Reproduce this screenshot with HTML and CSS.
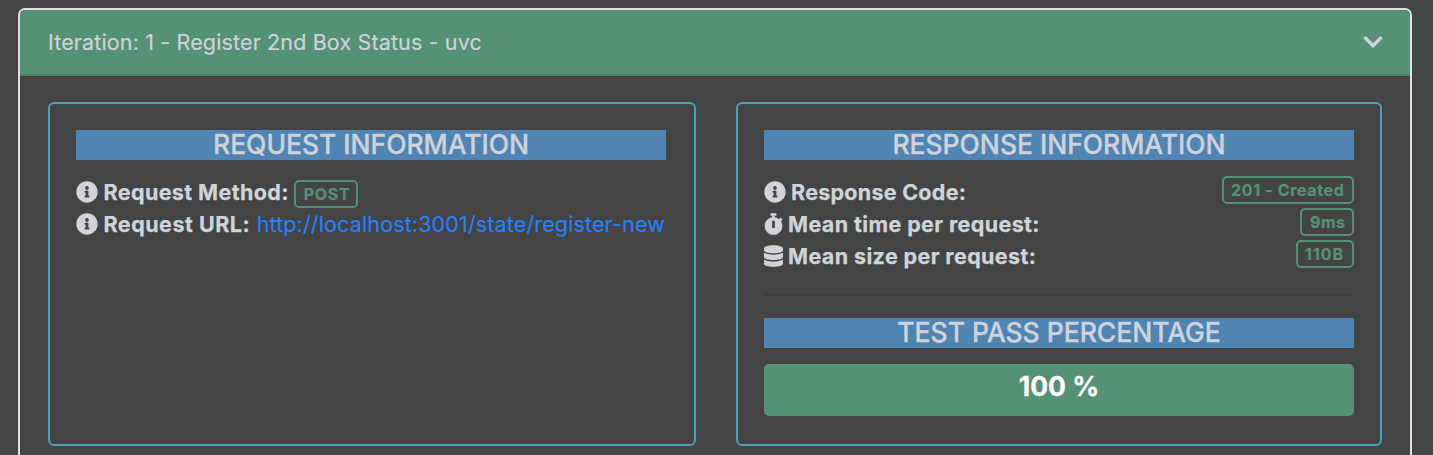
FILE: index.html
```html
<!DOCTYPE html>
<html lang="en">
<head>
<meta charset="utf-8">
<title>Iteration report</title>
<link rel="stylesheet" href="styles.css">
</head>
<body>
<svg class="defs" width="0" height="0">
  <symbol id="info" viewBox="0 0 512 512"><path d="M256 8C119.043 8 8 119.083 8 256c0 136.997 111.043 248 248 248s248-111.003 248-248C504 119.083 392.957 8 256 8zm0 110c23.196 0 42 18.804 42 42s-18.804 42-42 42-42-18.804-42-42 18.804-42 42-42zm56 254c0 6.627-5.373 12-12 12h-88c-6.627 0-12-5.373-12-12v-24c0-6.627 5.373-12 12-12h12v-64h-12c-6.627 0-12-5.373-12-12v-24c0-6.627 5.373-12 12-12h64c6.627 0 12 5.373 12 12v100h12c6.627 0 12 5.373 12 12v24z"/></symbol>
  <symbol id="stopwatch" viewBox="0 0 448 512"><path d="M432 304c0 114.9-93.1 208-208 208S16 418.9 16 304c0-104 76.3-190.2 176-205.5V64h-28c-6.6 0-12-5.4-12-12V12c0-6.6 5.4-12 12-12h120c6.6 0 12 5.4 12 12v40c0 6.600-5.400 12-12 12h-28v34.500c37.500 5.800 71.700 21.600 99.700 44.600l27.500-27.500c4.700-4.700 12.300-4.700 17 0l28.300 28.300c4.700 4.700 4.700 12.300 0 17l-29.400 29.400-.6.6C419.700 223.300 432 262.200 432 304zm-176 36V188.500c0-6.600-5.400-12-12-12h-40c-6.600 0-12 5.400-12 12V340c0 6.600 5.400 12 12 12h40c6.600 0 12-5.400 12-12z"/></symbol>
  <symbol id="database" viewBox="0 0 448 512"><path d="M448 73.143v45.714C448 159.143 347.667 192 224 192S0 159.143 0 118.857V73.143C0 32.857 100.333 0 224 0s224 32.857 224 73.143zM448 176v102.857C448 319.143 347.667 352 224 352S0 319.143 0 278.857V176c48.125 33.143 136.208 48.572 224 48.572S399.874 209.143 448 176zm0 160v102.857C448 479.143 347.667 512 224 512S0 479.143 0 438.857V336c48.125 33.143 136.208 48.572 224 48.572S399.874 369.143 448 336z"/></symbol>
</svg>
<section class="card">
  <header class="card-header">
    <span class="title">Iteration: 1 - Register 2nd Box Status - uvc</span>
    <svg class="chevron" viewBox="0 0 448 512"><path d="M207.029 381.476L12.686 187.132c-9.373-9.373-9.373-24.569 0-33.941l22.667-22.667c9.357-9.357 24.522-9.375 33.901-.04L224 284.505l154.745-154.021c9.379-9.335 24.544-9.317 33.901.04l22.667 22.667c9.373 9.373 9.373 24.569 0 33.941L240.971 381.476c-9.373 9.372-24.569 9.372-33.942 0z"/></svg>
  </header>
  <div class="card-body">
    <article class="panel">
      <h5 class="banner">REQUEST INFORMATION</h5>
      <div class="row"><svg class="icon"><use href="#info"/></svg><strong class="shifted">Request Method:</strong><span class="badge inline">POST</span></div>
      <div class="row"><svg class="icon"><use href="#info"/></svg><strong class="shifted wide">Request URL:</strong><a class="url">http://localhost:3001/state/register-new</a></div>
    </article>
    <article class="panel">
      <h5 class="banner">RESPONSE INFORMATION</h5>
      <div class="row"><svg class="icon response"><use href="#info"/></svg><strong class="code">Response Code:</strong><span class="badge end status">201 - Created</span></div>
      <div class="row"><svg class="icon narrow"><use href="#stopwatch"/></svg><strong>Mean time per request:</strong><span class="badge end time">9ms</span></div>
      <div class="row"><svg class="icon narrow"><use href="#database"/></svg><strong>Mean size per request:</strong><span class="badge end size">110B</span></div>
      <hr class="rule">
      <h5 class="banner">TEST PASS PERCENTAGE</h5>
      <div class="progress">100 %</div>
    </article>
  </div>
</section>
</body>
</html>
```
FILE: styles.css
```css
* { box-sizing: border-box; }
body {
  margin: 0;
  height: 455px;
  padding: 8px 21px 0 18px;
  background: #444;
  color: #ced4da;
  font: 21.5px/32px Inter, sans-serif;
}
.defs { position: absolute; }
.card {
  height: 447px;
  border: 2px solid #dfdfdf;
  border-bottom: 0;
  border-radius: 7px 7px 0 0;
}
.card-header {
  display: flex;
  align-items: center;
  justify-content: space-between;
  height: 66px;
  padding: 0 27px 0 28px;
  background: #559175;
  border-bottom: 2px solid #4a8066;
  border-radius: 5px 5px 0 0;
  color: #cdd2dc;
}
.title { letter-spacing: 0.14px; -webkit-text-stroke: 0.2px; }
.chevron { width: 20px; height: 22px; fill: currentColor; }
.card-body {
  display: grid;
  grid-template-columns: 648px 646px;
  column-gap: 40px;
  padding: 26px 28px 0;
}
.panel {
  height: 344px;
  padding: 26px 26px 0;
  border: 2px solid #46a2b8;
  border-radius: 6px;
}
.banner {
  height: 30px;
  width: 590px;
  margin: 0 0 16px;
  background: #4f84b3;
  color: #ced2da;
  font-size: 26.5px;
  line-height: 29px;
  font-weight: 500;
  letter-spacing: -0.03px;
  text-align: center;
  -webkit-text-stroke: 0.35px;
}
.row { display: flex; align-items: center; height: 32px; white-space: nowrap; }
.row strong {
  font-weight: 700;
  margin-left: 5px;
  letter-spacing: 0.39px;
  -webkit-text-stroke: 0.25px;
}
.row .shifted { margin-left: 5.5px; }
.row .wide { letter-spacing: 0.5px; }
.row .code { letter-spacing: 0.27px; }
.icon { flex: none; width: 22px; height: 22px; fill: #ced4da; }
.icon.narrow { width: 19px; }
.badge {
  width: 64px;
  height: 28px;
  padding-left: 7px;
  border: 2px solid #559175;
  border-radius: 5px;
  color: #559175;
  font-size: 16px;
  line-height: 25px;
  font-weight: 700;
  letter-spacing: 0.65px;
  -webkit-text-stroke: 0.2px;
}
.inline { align-self: flex-end; margin-left: 5px; padding-left: 8px; }
.end { align-self: flex-start; margin-left: auto; }
.status { width: 132px; }
.time { width: 54px; padding-left: 8px; letter-spacing: 0.5px; }
.size { width: 58px; letter-spacing: 1px; }
.url { color: #2780ff; margin-left: 6.5px; letter-spacing: 0.14px; -webkit-text-stroke: 0.15px; }
.rule { width: 590px; height: 2px; margin: 22px 0; border: 0; background: #3d3d3d; }
.progress {
  width: 590px;
  height: 52px;
  border-radius: 5px;
  background: #559175;
  color: #fff;
  font-size: 26.5px;
  line-height: 45px;
  font-weight: 700;
  text-align: center;
  -webkit-text-stroke: 0.3px;
}
```
